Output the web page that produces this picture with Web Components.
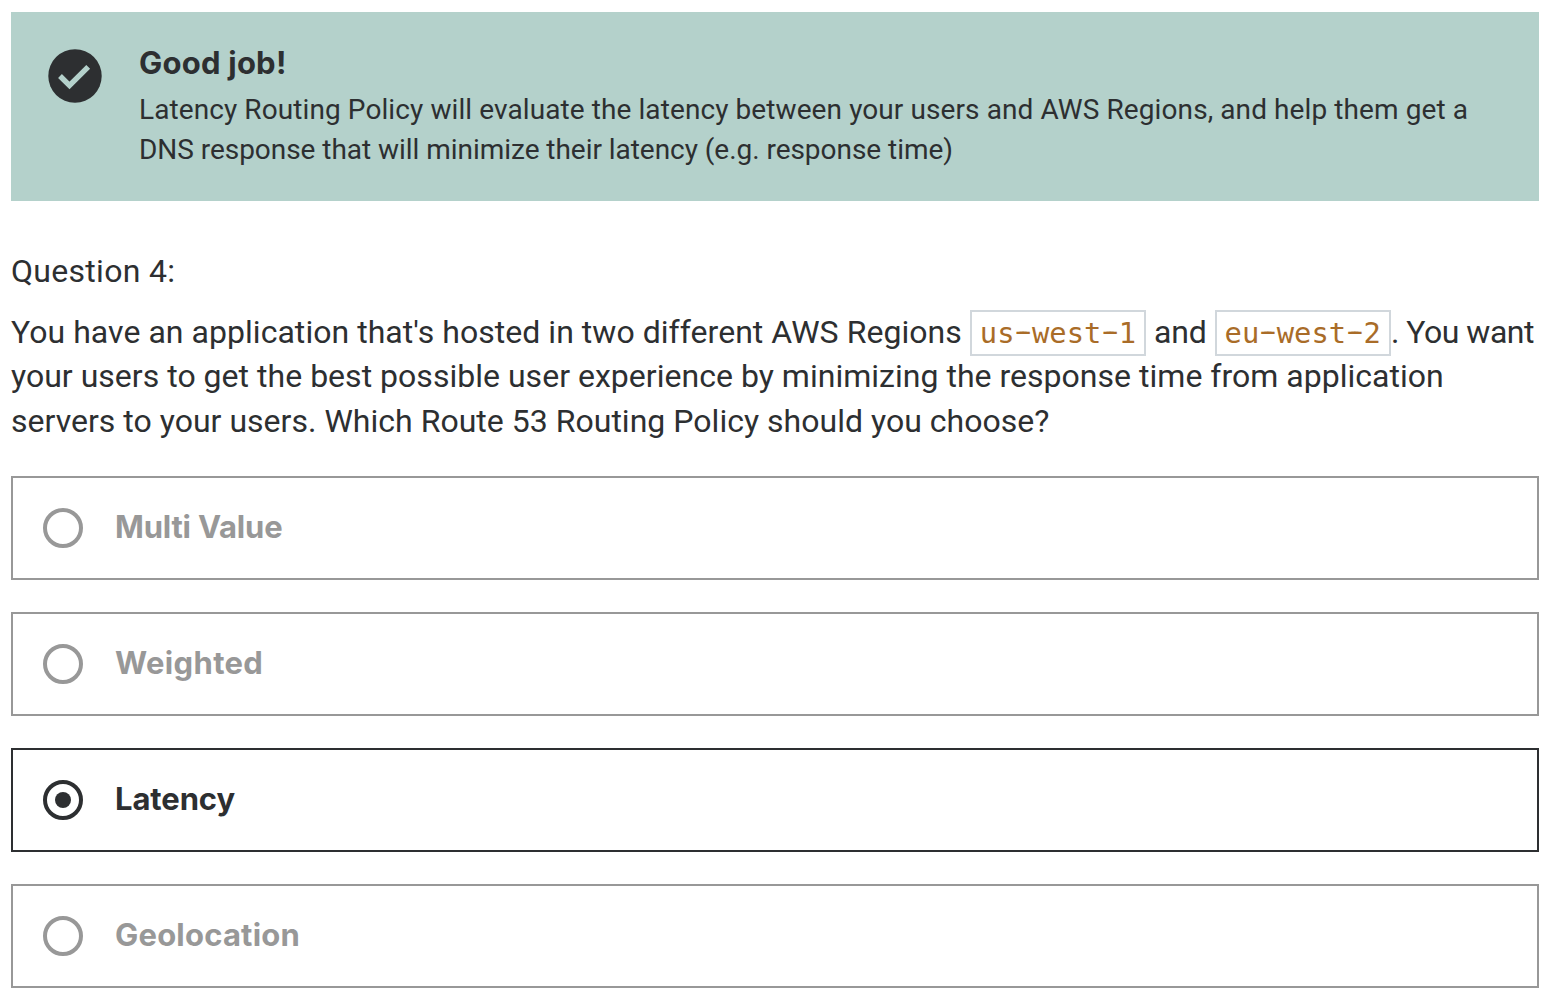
<!DOCTYPE html>
<html lang="en">
<head>
<meta charset="utf-8">
<title>Quiz question</title>
<style>
body { margin: 0; background: #fff; color: #2d2f31; font-family: Roboto, "Liberation Sans", sans-serif; }
</style>
</head>
<body>
<quiz-page>
  <quiz-alert slot="alert">
    <text-line slot="title" style="letter-spacing:.22px">Good job!</text-line>
    <text-line style="letter-spacing:.09px">Latency Routing Policy will evaluate the latency between your users and AWS Regions, and help them get a</text-line>
    <text-line style="letter-spacing:-.04px">DNS response that will minimize their latency (e.g. response time)</text-line>
  </quiz-alert>
  <quiz-question>
    <text-line slot="number" style="letter-spacing:.3px">Question 4:</text-line>
    <text-line style="letter-spacing:.04px">You have an application that's hosted in two different AWS Regions <inline-code>us<code-dash>-</code-dash>west<code-dash>-</code-dash>1</inline-code><span style="letter-spacing:-.15px"> and </span><inline-code>eu<code-dash>-</code-dash>west<code-dash>-</code-dash>2</inline-code><span style="letter-spacing:-.5px">. You want</span></text-line>
    <text-line style="letter-spacing:.02px">your users to get the best possible user experience by minimizing the response time from application</text-line>
    <text-line style="letter-spacing:.02px">servers to your users. Which Route 53 Routing Policy should you choose?</text-line>
  </quiz-question>
  <quiz-option slot="options" style="letter-spacing:-.2px">Multi Value</quiz-option>
  <quiz-option slot="options" style="letter-spacing:.35px">Weighted</quiz-option>
  <quiz-option slot="options" style="letter-spacing:-.1px" checked>Latency</quiz-option>
  <quiz-option slot="options" style="letter-spacing:.2px">Geolocation</quiz-option>
</quiz-page>
<script>
const define = (name, html) => customElements.define(name, class extends HTMLElement {
  constructor() {
    super();
    this.attachShadow({ mode: 'open' }).innerHTML = html.trim();
  }
});

define('text-line', `<style>:host { display: block; white-space: nowrap; }</style><slot></slot>`);

define('inline-code', `
<style>
:host { display: inline; padding: 4px 8px; border: 2px solid #d1d7dc; color: #a96c28;
  font: 28.8px "DejaVu Sans Mono", monospace; letter-spacing: .04px; }
</style><slot></slot>`);

// A hyphen widened to the width of the code face's other characters.
define('code-dash', `
<style>:host { display: inline; line-height: 0; vertical-align: 2px; text-shadow: 3px 0 currentColor, -3px 0 currentColor; }</style><slot></slot>`);

define('quiz-alert', `
<style>
:host { display: flex; gap: 37px; height: 189px; box-sizing: border-box; padding: 29px 37px 31px; background: #b4d1cb; }
svg { display: block; flex: none; width: 54px; height: 54px; margin-top: 8px; }
h2 { margin: 0 0 5px; font: 700 31px/44px Inter, "Liberation Sans", sans-serif; }
.body { font-size: 28px; line-height: 40px; }
</style>
<svg viewBox="0 0 54 54" aria-hidden="true">
  <circle cx="27" cy="27" r="26.7" fill="#2d2f31"/>
  <path d="M12 27 21.5 36.5 40.2 17.8" fill="none" stroke="#b4d1cb" stroke-width="5.4"/>
</svg>
<div><h2><slot name="title"></slot></h2><div class="body"><slot></slot></div></div>`);

define('quiz-question', `
<style>
:host { display: block; font-size: 32px; }
.number { line-height: 44px; margin-bottom: 17px; }
.text { line-height: 44.5px; }
::slotted(text-line:nth-child(3)) { margin: -.8px 0 .8px; }
</style>
<div class="number"><slot name="number"></slot></div>
<div class="text"><slot></slot></div>`);

define('quiz-option', `
<style>
:host { display: flex; align-items: center; gap: 32px; height: 104px; box-sizing: border-box; padding: 0 30px;
  border: 2px solid #989898; color: #989898; font: 700 31px/44px Inter, "Liberation Sans", sans-serif; }
:host([checked]) { border-color: #2d2f31; color: #2d2f31; }
.radio { display: grid; place-items: center; flex: none; width: 40px; height: 40px; box-sizing: border-box;
  border: 4px solid currentColor; border-radius: 50%; }
:host([checked]) .radio::before { content: ""; width: 16px; height: 16px; border-radius: 50%; background: currentColor; }
.label { padding-bottom: 2px; }
</style>
<span class="radio"></span><span class="label"><slot></slot></span>`);

define('quiz-page', `
<style>
:host { display: block; height: 998px; box-sizing: border-box; padding: 12px 9px 0 11px; overflow: hidden; }
.question { height: 227px; margin-top: 48px; }
.options { display: grid; gap: 32px; }
</style>
<slot name="alert"></slot>
<div class="question"><slot></slot></div>
<div class="options"><slot name="options"></slot></div>`);
</script>
</body>
</html>
